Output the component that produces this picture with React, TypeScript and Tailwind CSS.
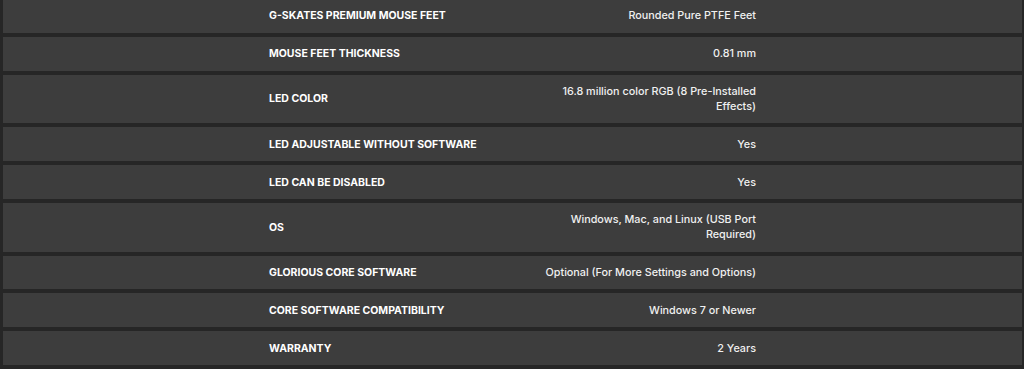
import React from "react";

const specs: { label: string; value: string }[] = [
  { label: "G-SKATES PREMIUM MOUSE FEET", value: "Rounded Pure PTFE Feet" },
  { label: "MOUSE FEET THICKNESS", value: "0.81 mm" },
  { label: "LED COLOR", value: "16.8 million color RGB (8 Pre-Installed Effects)" },
  { label: "LED ADJUSTABLE WITHOUT SOFTWARE", value: "Yes" },
  { label: "LED CAN BE DISABLED", value: "Yes" },
  { label: "OS", value: "Windows, Mac, and Linux (USB Port Required)" },
  { label: "GLORIOUS CORE SOFTWARE", value: "Optional (For More Settings and Options)" },
  { label: "CORE SOFTWARE COMPATIBILITY", value: "Windows 7 or Newer" },
  { label: "WARRANTY", value: "2 Years" },
];

export default function App() {
  return (
    <div className="min-h-[369px] bg-[#262626] pl-[3px] pr-[2px] overflow-hidden font-['Inter',sans-serif]">
      <div className="-mt-px flex flex-col gap-[4px]">
        {specs.map((s) => (
          <div key={s.label} className="flex justify-center bg-[#3d3d3d] py-[9.4px]">
            <div className="flex w-[487px] items-center justify-between leading-[15px]">
              <span className="text-[10.5px] font-bold text-white">{s.label}</span>
              <span className="w-[220px] text-right text-[10.8px] font-medium text-[#f0f0f0]">{s.value}</span>
            </div>
          </div>
        ))}
      </div>
    </div>
  );
}
